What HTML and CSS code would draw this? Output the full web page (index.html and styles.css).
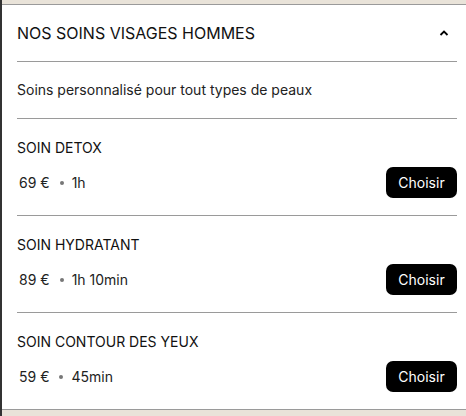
FILE: index.html
```html
<!DOCTYPE html>
<html lang="fr">
<head>
<meta charset="utf-8">
<link rel="stylesheet" href="styles.css">
</head>
<body>
<div class="frame">
  <section class="panel">
    <header class="panel-head">
      <h2 class="panel-title">NOS SOINS VISAGES HOMMES</h2>
      <svg class="chev" width="10" height="6" viewBox="0 0 10 6"><path d="M1.5 5 L5 1.5 L8.5 5" fill="none" stroke="#000" stroke-width="1.8"/></svg>
    </header>
    <p class="desc">Soins personnalisé pour tout types de peaux</p>
    <div class="item">
      <div class="item-name">SOIN DETOX</div>
      <div class="item-row">
        <div class="meta"><span>69 €</span><span class="dot"></span><span>1h</span></div>
        <button class="btn">Choisir</button>
      </div>
    </div>
    <div class="item">
      <div class="item-name">SOIN HYDRATANT</div>
      <div class="item-row">
        <div class="meta"><span>89 €</span><span class="dot"></span><span>1h 10min</span></div>
        <button class="btn">Choisir</button>
      </div>
    </div>
    <div class="item last">
      <div class="item-name">SOIN CONTOUR DES YEUX</div>
      <div class="item-row">
        <div class="meta"><span>59 €</span><span class="dot"></span><span>45min</span></div>
        <button class="btn">Choisir</button>
      </div>
    </div>
  </section>
</div>
</body>
</html>
```
FILE: styles.css
```css
html, body {
  margin: 0;
  padding: 0;
  height: 100%;
}
body {
  background: #e9e3d9;
  font-family: Inter, "Noto Sans", sans-serif;
  color: #111;
}
.frame {
  border-left: 2px solid #333;
  min-height: 100%;
  box-sizing: border-box;
  padding-top: 4px;
}
.panel {
  background: #fff;
  border-top: 1px solid #9a9a9a;
  border-bottom: 1px solid #9a9a9a;
  padding: 0 9px 0 15px;
}
.panel-head {
  display: flex;
  align-items: center;
  justify-content: space-between;
  height: 56px;
  border-bottom: 1px solid #9a9a9a;
}
.panel-title {
  margin: 0;
  font-size: 16px;
  font-weight: 400;
  letter-spacing: 0;
  color: #111;
}
.chev {
  margin-right: 8px;
}
.desc {
  margin: 0;
  height: 56px;
  line-height: 56px;
  font-size: 14px;
  color: #222;
  border-bottom: 1px solid #9a9a9a;
}
.item {
  height: 96px;
  border-bottom: 1px solid #9a9a9a;
  display: flex;
  flex-direction: column;
}
.item.last {
  border-bottom: none;
  height: 96px;
}
.item-name {
  font-size: 14px;
  margin-top: 20px;
  line-height: 17px;
  color: #111;
}
.item-row {
  display: flex;
  align-items: center;
  justify-content: space-between;
  margin-top: 11px;
}
.meta {
  display: flex;
  align-items: center;
  font-size: 14px;
  padding-left: 2px;
  color: #222;
}
.dot {
  width: 4px;
  height: 4px;
  border-radius: 50%;
  background: #777;
  margin: 0 8px 0 10px;
}
.btn {
  background: #000;
  color: #fff;
  border: none;
  border-radius: 7px;
  font-family: Inter, "Noto Sans", sans-serif;
  font-size: 14px;
  width: 71px;
  height: 31px;
  padding: 0;
  cursor: pointer;
}
```
